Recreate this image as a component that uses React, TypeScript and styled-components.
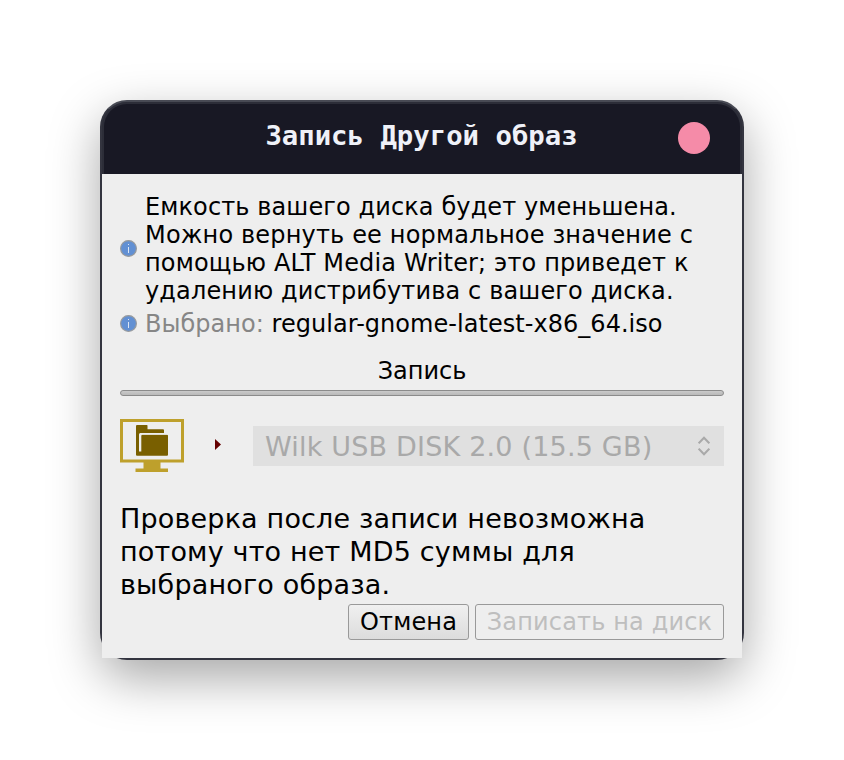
import React from "react";
import styled, { createGlobalStyle } from "styled-components";

const GlobalStyle = createGlobalStyle`
  * { box-sizing: border-box; }
  body {
    margin: 0;
    background: #fff;
    font-family: "DejaVu Sans", sans-serif;
    color: #000;
  }
`;

const Desktop = styled.main`
  width: 844px;
  height: 760px;
  padding: 100px;
  overflow: hidden;
`;

const Window = styled.section`
  width: 644px;
  height: 560px;
  border: 2px solid #33343f;
  border-top-color: #484a54;
  border-radius: 27px;
  background: #33343f;
  box-shadow: 0 18px 50px rgba(0, 0, 0, 0.35);
`;

const TitleBar = styled.header`
  height: 72px;
  padding: 0 30px 0 61px;
  display: grid;
  grid-template-columns: 1fr 32px;
  align-items: center;
  background: #181824;
  border: 2px solid #2c2d38;
  border-bottom: 0;
  border-radius: 25px 25px 0 0;
`;

const Title = styled.h1`
  margin: 0 0 7px;
  text-align: center;
  font: bold 27.3px/36px "DejaVu Sans Mono", monospace;
  white-space: nowrap;
  color: #eff1f8;
`;

const CloseButton = styled.button`
  width: 32px;
  height: 32px;
  margin-bottom: 2px;
  padding: 0;
  border: 0;
  border-radius: 50%;
  background: #f58ba8;
`;

const Content = styled.div`
  height: 484px;
  padding: 19px 18px 18px;
  background: #eee;
  display: flex;
  flex-direction: column;
`;

const InfoRow = styled.div<{ $gap?: number }>`
  display: flex;
  align-items: center;
  gap: 8px;
  margin-top: ${({ $gap = 0 }) => $gap}px;
  font-size: 24px;
  line-height: 28px;
  white-space: nowrap;
  svg {
    flex: none;
    margin-bottom: 1px;
  }
`;

const Line = styled.span<{ $tracking: number }>`
  display: block;
  letter-spacing: ${({ $tracking }) => $tracking}px;
`;

const Label = styled.span`
  color: #868686;
`;

const Stage = styled.div`
  margin-top: 19px;
  text-align: center;
  font-size: 24px;
  line-height: 28px;
`;

const Progress = styled.div`
  height: 6px;
  margin-top: 5px;
  border: 1px solid #8b8b8b;
  border-radius: 3px;
  background: linear-gradient(#cacaca, #b9b9b9);
`;

const DeviceRow = styled.div`
  display: grid;
  grid-template-columns: 64px 69px 471px;
  align-items: start;
  height: 53px;
  margin-top: 23px;
`;

const ArrowCell = styled.span`
  padding: 20px 0 0 31px;
  line-height: 0;
`;

const Select = styled.div`
  height: 40px;
  margin-top: 7px;
  padding: 1px 14px 0 12px;
  display: flex;
  align-items: center;
  justify-content: space-between;
  background: #e0e0e0;
  color: #a9a9a9;
  font-size: 27px;
  letter-spacing: 0.19px;
  line-height: 39px;
  white-space: nowrap;
  svg {
    margin-bottom: 1px;
  }
`;

const Notice = styled.p`
  margin: 30px 0 0;
  font-size: 27px;
  letter-spacing: 0.17px;
  line-height: 33px;
  white-space: nowrap;
`;

const Actions = styled.footer`
  display: flex;
  justify-content: flex-end;
  gap: 6px;
  margin-top: 3px;
`;

const Button = styled.button<{ $width: number }>`
  width: ${({ $width }) => $width}px;
  height: 36px;
  padding: 1px 0 0;
  border: 1px solid #999;
  border-radius: 3px;
  background: linear-gradient(#f0f0f0, #dcdcdc);
  color: #000;
  font: 24px/33px "DejaVu Sans", sans-serif;
  letter-spacing: 0.15px;
  white-space: nowrap;
  &:disabled {
    background: #eee;
    color: #bebebe;
  }
`;

const InfoIcon = () => (
  <svg width="17" height="17" viewBox="0 0 17 17">
    <circle cx="8.5" cy="8.5" r="7.9" fill="#6290d3" stroke="#999b9d" strokeWidth="1.2" />
    <path d="M8 4h1v1H8zM8 7h1v6H8z" fill="#dce6f4" />
  </svg>
);

const SourceIcon = () => (
  <svg width="64" height="53" viewBox="0 0 64 53">
    <path d="M1.500 1.500h61v40.500h-61z" fill="none" stroke="#bea02c" strokeWidth="3" />
    <path d="M23.500 43h17v6.500H48V53H15.500v-3.500h8z" fill="#bea02c" />
    <path d="M16 7q0-1 1-1h10q.5 0 .5 1v3.300H43q1 0 1 1V14H20.500q-1.500 0-1.500 1.500v17h2.300V17q0-1.300 1.300-1.300H47q1 0 1 1v19q0 1-1 1H17q-1 0-1-1z" fill="#795f00" />
    <path d="M20.200 32V16q0-1.200 1.200-1.200H48" fill="none" stroke="#eee" strokeWidth="1.500" />
  </svg>
);

const Arrow = () => (
  <svg width="6" height="11" viewBox="0 0 6 11">
    <path d="M0 0v11l6-5.5z" fill="#650000" />
  </svg>
);

const SelectArrows = () => (
  <svg width="12" height="20" viewBox="0 0 12 20" fill="none" stroke="#a9a9a9" strokeWidth="2">
    <path d="M.7 7.300 6 1.700l5.300 5.600M.7 12.700 6 18.300 11.300 12.700" />
  </svg>
);

export default function App() {
  return (
    <Desktop>
      <GlobalStyle />
      <Window>
        <TitleBar>
          <Title>Запись Другой образ</Title>
          <CloseButton aria-label="Закрыть" />
        </TitleBar>
        <Content>
          <InfoRow>
            <InfoIcon />
            <div>
              <Line $tracking={0.11}>Емкость вашего диска будет уменьшена.</Line>
              <Line $tracking={0.17}>Можно вернуть ее нормальное значение с</Line>
              <Line $tracking={0.15}>помощью ALT Media Writer; это приведет к</Line>
              <Line $tracking={0.14}>удалению дистрибутива с вашего диска.</Line>
            </div>
          </InfoRow>
          <InfoRow $gap={5}>
            <InfoIcon />
            <Line $tracking={0.04}><Label>Выбрано:</Label> regular-gnome-latest-x86_64.iso</Line>
          </InfoRow>
          <Stage>Запись</Stage>
          <Progress />
          <DeviceRow>
            <SourceIcon />
            <ArrowCell><Arrow /></ArrowCell>
            <Select>
              <span>Wilk USB DISK 2.0 (15.5 GB)</span>
              <SelectArrows />
            </Select>
          </DeviceRow>
          <Notice>
            Проверка после записи невозможна<br />
            потому что нет MD5 суммы для<br />
            выбраного образа.
          </Notice>
          <Actions>
            <Button $width={121}>Отмена</Button>
            <Button $width={249} disabled>Записать на диск</Button>
          </Actions>
        </Content>
      </Window>
    </Desktop>
  );
}
